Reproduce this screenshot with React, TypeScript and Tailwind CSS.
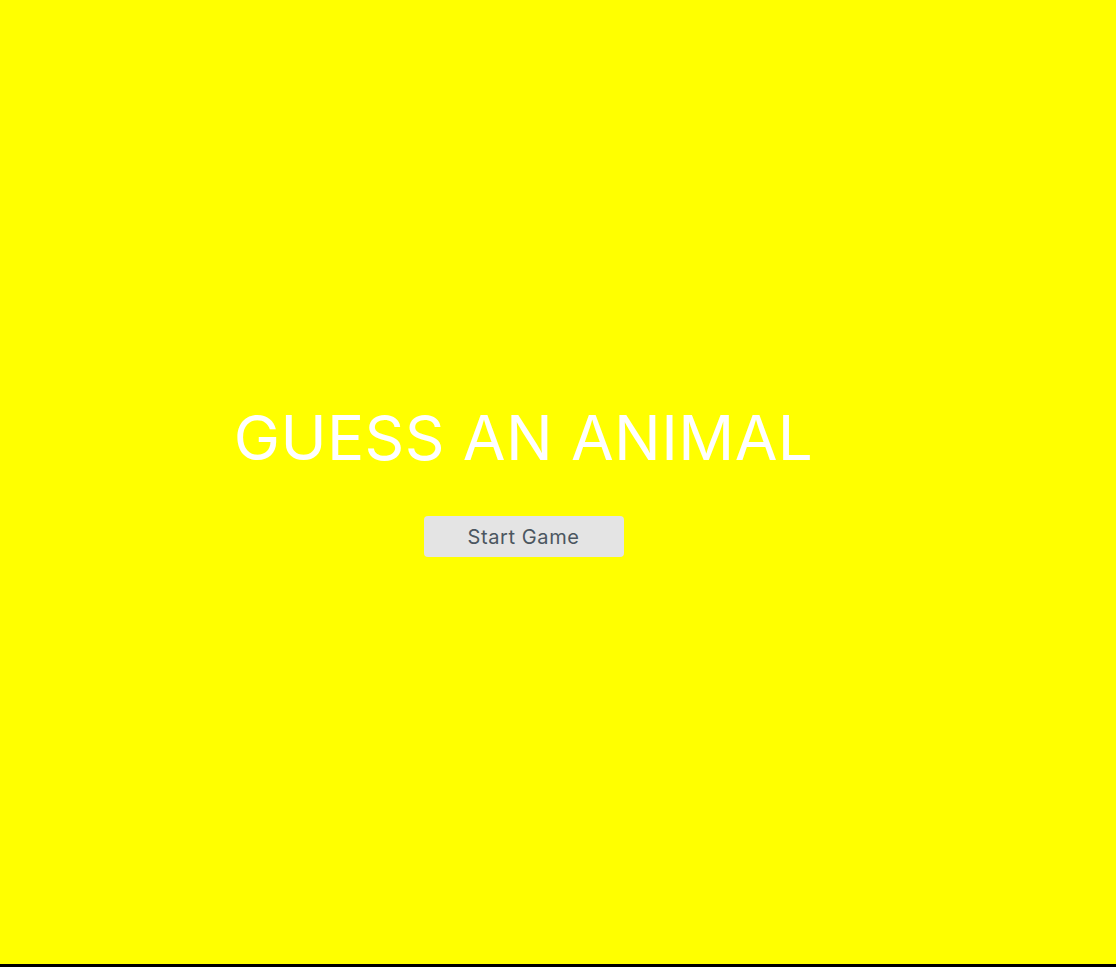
import React from 'react';

export default function App() {
    return (
        <div className="min-h-screen bg-black" style={{ fontFamily: 'Inter, "Open Sans", sans-serif' }}>
            <main className="h-[964px] bg-[#ffff00]">
                <div className="w-[1047px] h-full flex flex-col items-center justify-center">
                    <h1 className="text-[62px] leading-none font-normal text-white tracking-[0.4px]">GUESS AN ANIMAL</h1>
                    <button className="mt-[47px] w-[200px] h-[41px] rounded-[4px] bg-[#e4e4e4] text-[20px] text-[#4b5660] tracking-[0.6px]">
                        Start Game
                    </button>
                </div>
            </main>
        </div>
    );
}
